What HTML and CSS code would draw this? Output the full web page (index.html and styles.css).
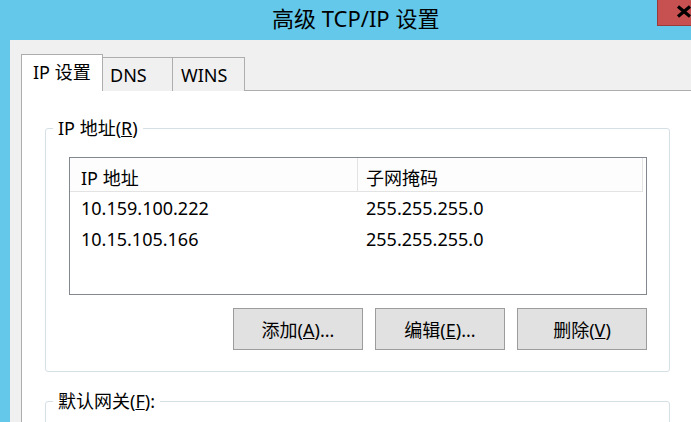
FILE: index.html
```html
<!DOCTYPE html>
<html lang="zh-CN">
<head>
    <meta charset="UTF-8">
    <title>高级 TCP/IP 设置</title>
    <link rel="stylesheet" href="styles.css">
</head>
<body>
    <div class="window">
        <div class="titlebar">
            <span class="title">高级 TCP/IP 设置</span>
        </div>
        <!-- close button sits over the title bar -->
        <div class="close-btn">
            <svg width="16" height="13" viewBox="0 0 16 13">
                <path d="M2 1.5 L14 11.5 M14 1.5 L2 11.5" stroke="#000" stroke-width="3.2" fill="none"/>
            </svg>
        </div>

        <div class="client">
            <div class="tabs">
                <div class="tab tab-active">IP 设置</div>
                <div class="tab tab-dns">DNS</div>
                <div class="tab tab-wins">WINS</div>
            </div>

            <div class="panel">
                <div class="group">
                    <div class="group-label">IP 地址(<u>R</u>)</div>

                    <div class="listview">
                        <div class="lv-head">
                            <div class="lv-col">IP 地址</div>
                            <div class="lv-col lv-col2">子网掩码</div>
                        </div>
                        <div class="lv-rows">
                            <div class="lv-row">
                                <span class="lv-cell">10.159.100.222</span>
                                <span class="lv-cell lv-cell2">255.255.255.0</span>
                            </div>
                            <div class="lv-row">
                                <span class="lv-cell">10.15.105.166</span>
                                <span class="lv-cell lv-cell2">255.255.255.0</span>
                            </div>
                        </div>
                    </div>

                    <div class="buttons">
                        <button>添加(<u>A</u>)...</button>
                        <button>编辑(<u>E</u>)...</button>
                        <button>删除(<u>V</u>)</button>
                    </div>
                </div>

                <div class="group group-gateway">
                    <div class="group-label">默认网关(<u>F</u>):</div>
                </div>
            </div>
        </div>
    </div>
</body>
</html>
```

FILE: styles.css
```css
body {
    margin: 0;
    overflow: hidden;
    font-family: "Noto Sans", "Noto Sans CJK SC", sans-serif;
    font-size: 18px;
    color: #000;
}
.window {
    position: relative;
    width: 691px;
    height: 422px;
    background: #63c8ea;
    overflow: hidden;
}
.titlebar {
    height: 40px;
    box-sizing: border-box;
    display: flex;
    align-items: center;
    padding: 0 0 5px 272px;
    font-size: 22px;
    line-height: 1;
}
.close-btn {
    position: absolute;
    left: 657px;
    top: 0;
    width: 52px;
    height: 26px;
    box-sizing: border-box;
    background: #c75050;
    border: 1px solid #9a3b3b;
    border-top: none;
    padding: 5px 0 0 18px;
}
.close-btn svg {
    display: block;
}
.client {
    margin-left: 10px;
    height: 382px;
    box-sizing: border-box;
    background: #f0f0f0;
    padding: 14px 0 0 11px;
}
.tabs {
    display: flex;
    align-items: flex-end;
    height: 37px;
}
.tab {
    height: 34px;
    box-sizing: border-box;
    display: flex;
    align-items: center;
    padding-left: 7px;
    background: #f0f0f0;
    border-top: 1px solid #adadad;
    border-right: 1px solid #adadad;
    line-height: 1;
}
.tab-active {
    position: relative;
    z-index: 1;
    width: 82px;
    height: 37px;
    padding: 0 0 3px 11px;
    background: #fff;
    border-left: 1px solid #adadad;
}
.tab-dns {
    width: 70px;
}
.tab-wins {
    width: 72px;
    padding-left: 8px;
}
.panel {
    margin-top: -1px;
    height: 400px;
    background: #fff;
    border-top: 1px solid #adadad;
    border-left: 1px solid #adadad;
    padding-left: 23px;
}
.group {
    margin-top: 37px;
    width: 625px;
    box-sizing: border-box;
    border: 1px solid #d5dfe6;
    border-radius: 3px;
    padding: 0 22px 21px 23px;
}
.group-label {
    width: fit-content;
    height: 24px;
    line-height: 24px;
    margin: -13px 0 0 -16px;
    padding: 0 5px;
    background: #fff;
}
.group-gateway {
    margin-top: 29px;
    height: 80px;
}
.listview {
    margin-top: 17px;
    height: 138px;
    box-sizing: border-box;
    border: 1px solid #828790;
    background: #fff;
}
.lv-head {
    display: grid;
    grid-template-columns: 288px 285px;
    height: 34px;
}
.lv-col {
    box-sizing: border-box;
    padding: 7px 0 0 11px;
    line-height: 26px;
    background: #fdfdfd;
    border-right: 1px solid #e3e3e3;
    border-bottom: 1px solid #e3e3e3;
}
.lv-col2 {
    padding-left: 8px;
}
.lv-rows {
    padding-top: 1px;
}
.lv-row {
    display: grid;
    grid-template-columns: 288px 285px;
    height: 31px;
    line-height: 31px;
}
.lv-cell {
    padding-left: 11px;
}
.lv-cell2 {
    padding-left: 8px;
}
.buttons {
    display: flex;
    justify-content: flex-end;
    gap: 12px;
    margin-top: 13px;
}
button {
    width: 130px;
    height: 42px;
    font-family: inherit;
    font-size: 18px;
    color: #000;
    background: #e1e1e1;
    border: 1px solid #9c9c9c;
    border-radius: 0;
    padding: 0;
}
```
